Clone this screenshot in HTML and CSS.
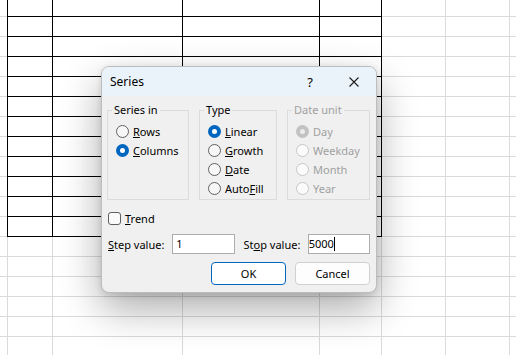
FILE: index.html
```html
<!DOCTYPE html>
<html lang="en">

<head>
    <meta charset="UTF-8">
    <meta name="viewport" content="width=device-width, initial-scale=1.0">
    <title>Series</title>
    <link rel="stylesheet" href="styles.css">
</head>

<body>

    <!-- Worksheet behind the dialog -->
    <div class="sheet">
        <div class="cells">
            <div></div><div></div><div></div><div></div>
            <div></div><div></div><div></div><div></div>
            <div></div><div></div><div></div><div></div>
            <div></div><div></div><div></div><div></div>
            <div></div><div></div><div></div><div></div>
            <div></div><div></div><div></div><div></div>
            <div></div><div></div><div></div><div></div>
            <div></div><div></div><div></div><div></div>
            <div></div><div></div><div></div><div></div>
            <div></div><div></div><div></div><div></div>
            <div></div><div></div><div></div><div></div>
            <div></div><div></div><div></div><div></div>
        </div>

        <!-- Series dialog -->
        <div class="dialog">
            <div class="titlebar">
                <span class="title">Series</span>
                <span class="help">?</span>
                <svg class="close" width="10" height="10" viewBox="0 0 10 10">
                    <path d="M0.5 0.5 L9.5 9.5 M9.5 0.5 L0.5 9.5" stroke="#1b1b1b" stroke-width="1.1" fill="none" />
                </svg>
            </div>

            <div class="body">
                <div class="groups">
                    <fieldset class="group group-series">
                        <legend>Series in</legend>
                        <div class="option"><span class="radio"></span><span><u>R</u>ows</span></div>
                        <div class="option"><span class="radio checked"></span><span><u>C</u>olumns</span></div>
                    </fieldset>

                    <fieldset class="group group-type">
                        <legend>Type</legend>
                        <div class="option"><span class="radio checked"></span><span><u>L</u>inear</span></div>
                        <div class="option"><span class="radio"></span><span><u>G</u>rowth</span></div>
                        <div class="option"><span class="radio"></span><span><u>D</u>ate</span></div>
                        <div class="option"><span class="radio"></span><span>Auto<u>F</u>ill</span></div>
                    </fieldset>

                    <fieldset class="group group-date disabled">
                        <legend>Date unit</legend>
                        <div class="option"><span class="radio checked"></span><span>Day</span></div>
                        <div class="option"><span class="radio"></span><span>Weekday</span></div>
                        <div class="option"><span class="radio"></span><span>Month</span></div>
                        <div class="option"><span class="radio"></span><span>Year</span></div>
                    </fieldset>
                </div>

                <div class="trend">
                    <span class="checkbox"></span><span><u>T</u>rend</span>
                </div>

                <div class="values">
                    <span class="value-label"><u>S</u>tep value:</span>
                    <div class="edit">1</div>
                    <span class="value-label stop-label">St<u>o</u>p value:</span>
                    <div class="edit edit-focus">5000<span class="caret"></span></div>
                </div>

                <div class="buttons">
                    <button class="btn btn-default">OK</button>
                    <button class="btn">Cancel</button>
                </div>
            </div>
        </div>
    </div>

</body>

</html>
```

FILE: styles.css
```css
/* Basic Reset */
* {
    margin: 0;
    padding: 0;
    box-sizing: border-box;
}

body {
    font-family: 'Noto Sans', 'Liberation Sans', sans-serif;
    font-size: 11px;
    color: #000;
    background: #fff;
}

/* Worksheet grid */
.sheet {
    position: relative;
    width: 516px;
    height: 355px;
    overflow: hidden;
    background-color: #fff;
    background-image:
        linear-gradient(#dadada, #dadada),
        linear-gradient(#dadada, #dadada),
        linear-gradient(#dadada, #dadada),
        linear-gradient(#dadada, #dadada),
        linear-gradient(#dadada, #dadada),
        linear-gradient(#dadada, #dadada),
        linear-gradient(#dadada, #dadada),
        repeating-linear-gradient(to bottom, transparent 0 16px, #dadada 16px 17px, transparent 17px 20px);
    background-size: 1px 100%, 1px 100%, 1px 100%, 1px 100%, 1px 100%, 1px 100%, 1px 100%, 100% 100%;
    background-position: 7px 0, 52px 0, 182px 0, 319px 0, 381px 0, 445px 0, 509px 0, 0 0;
    background-repeat: no-repeat;
}

.cells {
    display: grid;
    grid-template-columns: 44px 129px 136px 61px;
    grid-auto-rows: 19px;
    gap: 1px;
    padding: 1px;
    width: 375px;
    margin: -4px 0 0 7px;
    background: #000;
}

.cells div {
    background: #fff;
}

/* Dialog window */
.dialog {
    position: absolute;
    left: 101px;
    top: 66px;
    width: 276px;
    height: 227px;
    background: #f0f0f0;
    border: 1px solid #bdbdbd;
    border-radius: 8px;
    overflow: hidden;
    box-shadow: 0 16px 40px rgba(0, 0, 0, 0.33), 0 2px 6px rgba(0, 0, 0, 0.12);
}

.titlebar {
    display: flex;
    align-items: center;
    height: 29px;
    background: #ebf3fa;
    font-size: 12px;
}

.title {
    padding-left: 8px;
    flex: 1;
}

.help {
    width: 16px;
    text-align: center;
    font-size: 13px;
    margin-right: 31px;
}

.close {
    margin-right: 17px;
}

.body {
    padding: 6px 6px 0 5px;
}

/* Group boxes */
.groups {
    display: flex;
    gap: 10px;
}

.group {
    border: 1px solid #dcdcdc;
    padding: 4px 0 1px 8px;
    min-width: 0;
}

.group legend {
    padding: 0 2px;
    margin-left: -4px;
    line-height: 16px;
}

.group-series {
    width: 82px;
}

.group-type {
    width: 78px;
}

.group-date {
    width: 83px;
}

.option {
    display: flex;
    align-items: center;
    gap: 4px;
    height: 19px;
}

.radio {
    width: 13px;
    height: 13px;
    border-radius: 50%;
    border: 1px solid #616161;
    background: #f7f7f7;
    flex-shrink: 0;
}

.radio.checked {
    border: 4px solid #0067c0;
    background: #fff;
}

.disabled legend,
.disabled .option {
    color: #a0a0a0;
}

.disabled .radio {
    border-color: #c6c6c6;
    background: #fbfbfb;
}

.disabled .radio.checked {
    border: 4px solid #c2c2c2;
    background: #ececec;
}

/* Trend checkbox */
.trend {
    display: flex;
    align-items: center;
    gap: 4px;
    height: 19px;
    margin-top: 9px;
    padding-left: 1px;
}

.checkbox {
    width: 13px;
    height: 13px;
    border: 1px solid #5f5f5f;
    border-radius: 3px;
    background: #fafafa;
}

/* Step / stop values */
.values {
    display: flex;
    align-items: center;
    margin-top: 6px;
    padding-left: 1px;
}

.value-label {
    width: 65px;
}

.stop-label {
    margin-left: 9px;
}

.edit {
    width: 63px;
    height: 20px;
    line-height: 18px;
    border: 1px solid #adadad;
    background: #fff;
    padding-left: 3px;
}

.edit-focus {
    padding-left: 0;
}

.caret {
    display: inline-block;
    width: 1px;
    height: 14px;
    background: #000;
    vertical-align: -3px;
}

/* Buttons */
.buttons {
    display: flex;
    justify-content: flex-end;
    gap: 9px;
    margin-top: 8px;
}

.btn {
    width: 75px;
    height: 23px;
    font-family: inherit;
    font-size: 11px;
    background: #fdfdfd;
    border: 1px solid #d0d0d0;
    border-radius: 4px;
    color: #000;
}

.btn-default {
    border-color: #0067c0;
    background: #fff;
}
```
